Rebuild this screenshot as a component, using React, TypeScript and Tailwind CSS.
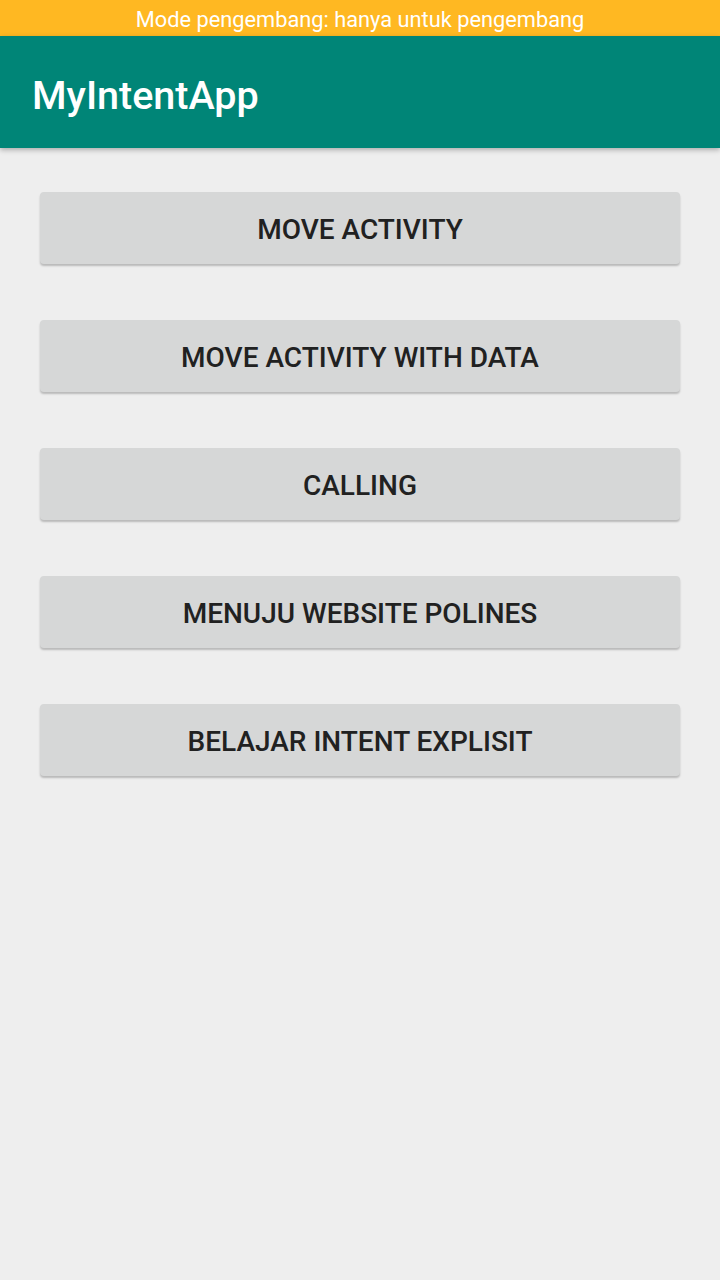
const BUTTONS = [
  "MOVE ACTIVITY",
  "MOVE ACTIVITY WITH DATA",
  "CALLING",
  "MENUJU WEBSITE POLINES",
  "BELAJAR INTENT EXPLISIT",
];

export default function App() {
  return (
    <div className="flex min-h-[1280px] w-[720px] flex-col bg-[#eeeeee] font-['Roboto',sans-serif]">
      <div className="flex h-9 items-center justify-center bg-[#ffb822] pt-1 text-[21.8px] text-white">
        Mode pengembang: hanya untuk pengembang
      </div>
      <header className="relative z-10 flex h-28 items-center bg-[#008577] px-8 pt-2 shadow-[0_2px_5px_rgba(0,0,0,0.28)]">
        <h1 className="text-[39.5px] font-medium text-white">MyIntentApp</h1>
      </header>
      <main className="flex flex-col gap-14 px-10 pt-11">
        {BUTTONS.map((label) => (
          <button
            key={label}
            type="button"
            className="flex h-[72px] items-center justify-center rounded-[4px] bg-[#d6d7d7] pt-1 text-[28px] font-medium text-[#212121] shadow-[0_2px_2px_rgba(0,0,0,0.22)]"
          >
            {label}
          </button>
        ))}
      </main>
    </div>
  );
}
